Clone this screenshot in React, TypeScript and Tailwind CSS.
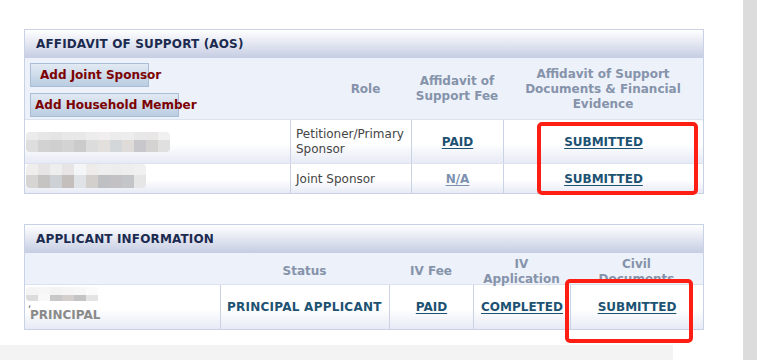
import React from "react";

const rowGrad = "bg-[linear-gradient(to_bottom,#ffffff_55%,#e7eaf5)]";
const linkCls = "font-bold text-[#1d5273] underline underline-offset-2";
const thCls = "font-bold text-[#8593ab] text-center leading-[15px]";

function Blur({ top, bottom, topH, botH }: { top: string[]; bottom: string[]; topH: number; botH: number }) {
  return (
    <div className="flex flex-col rounded-[4px] overflow-hidden">
      <div className="flex">
        {top.map((c, i) => (
          <div key={i} className="w-[12px]" style={{ background: c, height: topH }} />
        ))}
      </div>
      <div className="flex">
        {bottom.map((c, i) => (
          <div key={i} className="w-[12px]" style={{ background: c, height: botH }} />
        ))}
      </div>
    </div>
  );
}

function Btn({ label, w, pl }: { label: string; w: string; pl: string }) {
  return (
    <div
      className={`${w} ${pl} h-[24px] flex items-center whitespace-nowrap border border-[#a9bdd6] bg-[linear-gradient(to_bottom,#e2eaf3,#bacde1)] font-bold text-[#7c0000] text-[12px] overflow-visible`}
    >
      {label}
    </div>
  );
}

export default function App() {
  return (
    <div className="flex w-[757px] h-[360px] bg-white font-['DejaVu_Sans',sans-serif] text-[12px] overflow-hidden">
      <div className="w-[743px] flex flex-col">
        <div className="pt-[29px] pl-[24px] relative">
          {/* Panel 1 */}
          <div className="w-[680px] border border-[#c9d1e4]">
            <div className="h-[28px] flex items-center pl-[11px] bg-[linear-gradient(to_bottom,#ffffff,#c6cde3)] font-bold text-[12px] tracking-[0.15px] text-[#1c2a50]">
              AFFIDAVIT OF SUPPORT (AOS)
            </div>
            <div className="grid grid-cols-[265px_121px_92px_1fr] h-[61px] bg-[#edf1f9]">
              <div className="flex flex-col gap-[6px] pt-[5px] pl-[5px]">
                <Btn label="Add Joint Sponsor" w="w-[119px]" pl="pl-[9px]" />
                <Btn label="Add Household Member" w="w-[149px]" pl="pl-[4px]" />
              </div>
              <div className={`${thCls} flex items-center justify-center pl-[30px] pt-[1px]`}>Role</div>
              <div className={`${thCls} flex items-center justify-center pt-[1px]`}>
                Affidavit of<br />Support Fee
              </div>
              <div className={`${thCls} flex items-center justify-center pt-[1px]`}>
                Affidavit of Support<br />Documents &amp; Financial<br />Evidence
              </div>
            </div>
            <div className={`grid grid-cols-[265px_121px_92px_1fr] h-[44px] border-t border-[#dde2ef] ${rowGrad}`}>
              <div className="flex items-center pl-[1px] pt-[1px]">
                <Blur
                  topH={8}
                  botH={12}
                  top={["#ebebeb", "#e6e6e6", "#e4e4e4", "#e8e8e8", "#e8e8e8", "#ededed", "#f0eeee", "#ececec", "#eeeded", "#e8e8e8", "#e8e6e6", "#f0f0f0"]}
                  bottom={["#dedede", "#d2d2d2", "#cfcfcf", "#d3d3d3", "#cbcbcb", "#dcdcdc", "#e2dfdc", "#d4d7d9", "#dedbd8", "#c8c8cc", "#d5d3d1", "#e0e0e0"]}
                />
              </div>
              <div className="border-l border-[#cbd2e5] flex items-center pl-[5px] leading-[15px] text-[#454545]">
                Petitioner/Primary<br />Sponsor
              </div>
              <div className="border-l border-[#cbd2e5] flex items-center justify-center">
                <span className={linkCls}>PAID</span>
              </div>
              <div className="border-l border-[#cbd2e5] flex items-center justify-center">
                <span className={linkCls}>SUBMITTED</span>
              </div>
            </div>
            <div className={`grid grid-cols-[265px_121px_92px_1fr] h-[30px] border-t border-[#dde2ef] ${rowGrad}`}>
              <div className="flex items-start pl-[1px]">
                <Blur
                  topH={11}
                  botH={13}
                  top={["#f0eeec", "#e6e4e4", "#eeeeee", "#e6e4e4", "#f4f5f7", "#eeeceb", "#eeeeee", "#ededed", "#eeeeee", "#f0f0f0"]}
                  bottom={["#d7d5d3", "#c6c3c3", "#cdd0d4", "#c4bfbd", "#dfe2e6", "#d2cfcc", "#bfc0c3", "#c3c1c3", "#c4c5c9", "#e6e6e6"]}
                />
              </div>
              <div className="border-l border-[#cbd2e5] flex items-center pl-[5px] text-[#454545]">
                Joint Sponsor
              </div>
              <div className="border-l border-[#cbd2e5] flex items-center justify-center">
                <span className="font-bold text-[#7d92b0] underline underline-offset-2">N/A</span>
              </div>
              <div className="border-l border-[#cbd2e5] flex items-center justify-center">
                <span className={linkCls}>SUBMITTED</span>
              </div>
            </div>
          </div>

          {/* Panel 2 */}
          <div className="w-[680px] border border-[#c9d1e4] mt-[30px]">
            <div className="h-[28px] flex items-center pl-[11px] bg-[linear-gradient(to_bottom,#ffffff,#c6cde3)] font-bold text-[12px] tracking-[0.15px] text-[#1c2a50]">
              APPLICANT INFORMATION
            </div>
            <div className="grid grid-cols-[195px_169px_84px_97px_1fr] h-[31px] bg-[#edf1f9]">
              <div />
              <div className={`${thCls} flex items-center justify-center pt-[2px]`}>Status</div>
              <div className={`${thCls} flex items-center justify-center pt-[2px]`}>IV Fee</div>
              <div className={`${thCls} flex items-center justify-center pt-[4px]`}>
                IV<br />Application
              </div>
              <div className={`${thCls} flex items-center justify-center pt-[4px]`}>
                Civil<br />Documents
              </div>
            </div>
            <div className={`grid grid-cols-[195px_169px_84px_97px_1fr] h-[45px] border-t border-[#dde2ef] ${rowGrad}`}>
              <div className="flex flex-col pl-[1px] pt-[2px]">
                <Blur
                  topH={8}
                  botH={6}
                  top={["#f4f4f4", "#f6f6f6", "#f3f3f3", "#f5f5f5", "#f7f7f7", "#fbfbfb"]}
                  bottom={["#dcdcdc", "#f8f8f8", "#c8c8c8", "#d4cfcc", "#c4c4c4", "#e4e4e4"]}
                />
                <div className="h-[8px] pl-[2px] leading-[6px] text-[#555] text-[10px]">,</div>
                <div className="pl-[4px] font-bold text-[#8a8a8a] leading-[14px] -mt-[1px]">PRINCIPAL</div>
              </div>
              <div className="border-l border-[#cbd2e5] flex items-center pl-[6px] font-bold tracking-[0.25px] text-[#1d5273] pb-[1px]">
                PRINCIPAL APPLICANT
              </div>
              <div className="border-l border-[#cbd2e5] flex items-center justify-center pb-[1px]">
                <span className={linkCls}>PAID</span>
              </div>
              <div className="border-l border-[#cbd2e5] flex items-center justify-center pb-[1px]">
                <span className={linkCls}>COMPLETED</span>
              </div>
              <div className="border-l border-[#cbd2e5] flex items-center justify-center pb-[1px]">
                <span className={linkCls}>SUBMITTED</span>
              </div>
            </div>
          </div>

          {/* annotation boxes */}
          <div className="absolute left-[537px] top-[122px] w-[161px] h-[73px] border-[4px] border-[#ff1e14] rounded-[5px]" />
          <div className="absolute left-[565px] top-[279px] w-[128px] h-[64px] border-[4px] border-[#ff1e14] rounded-[5px]" />
        </div>
        <div className="flex-1" />
        <div className="h-[15px] w-[673px] bg-[#f3f3f3]" />
      </div>
      <div className="w-[14px] h-full bg-[#dcdcdc]" />
    </div>
  );
}
